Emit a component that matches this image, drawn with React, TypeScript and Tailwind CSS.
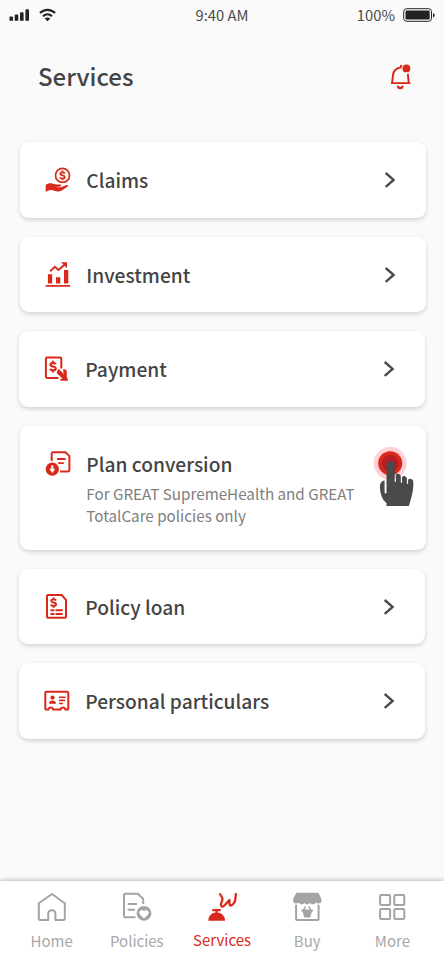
import React from 'react';

const RED = '#d9291c';

function Svg({ w, h, className = '', children }: { w: number; h: number; className?: string; children: React.ReactNode }) {
  return (
    <svg width={w} height={h} viewBox={`0 0 ${w} ${h}`} fill="none" className={`block shrink-0 ${className}`}>
      {children}
    </svg>
  );
}

/* Dollar sign drawn around the local origin */
function Dollar({ x, y, s }: { x: number; y: number; s: number }) {
  return (
    <g transform={`translate(${x} ${y}) scale(${s})`} stroke={RED} strokeWidth="2.1">
      <path d="M2.6-2.2C2-3.2 1-3.5 0-3.5c-1.5 0-2.4.7-2.4 1.7C-2.4.5 2.6-.6 2.6 1.8 2.6 2.9 1.5 3.6 0 3.6c-1.2 0-2.2-.4-2.9-1.4M0-5.5v2M0 3.5v2" />
    </g>
  );
}

function ClaimsIcon() {
  return (
    <Svg w={28} h={27}>
      <circle cx="18.5" cy="8.4" r="7" stroke={RED} strokeWidth="1.7" />
      <Dollar x={18.5} y={8.4} s={0.88} />
      <path d="M1.7 17.9c2-1.6 4.7-2 7.2-1.2l3.2.9h4c1.5 0 1.6 1.8.2 2l-4 .3v.4h4.7l5.5-2.3c1.4-.5 2.1.7 1.1 1.5l-5 3.6c-1.6 1.1-3.4 1.7-5.2 1.3l-5-1.2c-1.8-.4-3-.1-4.2.6l-2.5 1z" fill={RED} />
    </Svg>
  );
}

function InvestmentIcon() {
  return (
    <Svg w={28} h={27}>
      <path d="M1.7 23h24.4v1.8H1.7zM3.9 12.3h4.3v9.3H3.9zM12 15.3h4.3v6.3H12zM20 8h4.3v13.6H20z" fill={RED} />
      <path d="m6.2 9.2 4.6-4.4 3.6 3.1 7-5.9" stroke={RED} strokeWidth="2" />
      <path d="M17 .3h6v6z" fill={RED} />
    </Svg>
  );
}

function PaymentIcon() {
  return (
    <Svg w={28} h={27}>
      <path d="M18.3 12.6V2.9c0-.9-.6-1.3-1.4-1.3H4.3c-.9 0-1.4.5-1.4 1.3v17.8c0 .9.6 1.4 1.4 1.4h11.2" stroke={RED} strokeWidth="2" />
      <Dollar x={10} y={10.6} s={1.05} />
      <path d="m15.3 14.2 5.4 4.2-.6-5 1.1-.4 1 1.1.6-.6 1 1.6v6l1.4 3.6h-7.6l-.5-1.5 2.4-.7-4.7-4.2c-.9-.9-.9-2.1-1-2.9z" fill={RED} />
      <path d="m15 13.8 5 4.6" stroke={RED} strokeWidth="2" />
    </Svg>
  );
}

function PlanIcon() {
  return (
    <Svg w={28} h={27}>
      <path d="M7.7 9.9V2.6c0-.8.5-1.3 1.3-1.3h12.4l4 3.8v14c0 .8-.5 1.3-1.3 1.3h-8.2" stroke={RED} strokeWidth="2" />
      <path d="M13 8h8.6M14.2 12.2h5.6" stroke={RED} strokeWidth="1.8" />
      <circle cx="8.3" cy="18.2" r="6.6" fill={RED} />
      <path d="M8.3 14.3v4" stroke="white" strokeWidth="2" />
      <path d="M5.4 17.8h5.8l-2.9 4.4z" fill="white" />
    </Svg>
  );
}

function LoanIcon() {
  return (
    <Svg w={28} h={27}>
      <path d="M4 2v20.8c0 .6.4 1 1 1h17c.6 0 1-.4 1-1V5.8L18.7 1H5c-.6 0-1 .4-1 1z" stroke={RED} strokeWidth="2" />
      <Dollar x={10.6} y={8.6} s={0.95} />
      <path d="M7.5 16.3h4M12.5 16.3h7.2M7.5 20h4M12.5 20h7.2" stroke={RED} strokeWidth="2" />
    </Svg>
  );
}

function ParticularsIcon() {
  return (
    <Svg w={28} h={27}>
      <path d="M2.3 5v15.4c0 .8.4 1.2 1.1 1.2h2c.4-2.9 4.4-2.9 4.8 0h7.4c.4-2.9 4.4-2.9 4.8 0h1.8c.7 0 1.1-.4 1.1-1.2V5c0-.8-.4-1.2-1.1-1.2H3.4C2.7 3.8 2.3 4.2 2.3 5z" stroke={RED} strokeWidth="2" />
      <circle cx="9.5" cy="9.6" r="2.1" fill={RED} />
      <path d="M6 15.7c0-4.4 7-4.4 7 0zM16 8.5h6.6v1.6H16zM16 11.6h6v1.6h-6zM16 14.7h4v1.6h-4z" fill={RED} />
    </Svg>
  );
}

function Chevron() {
  return (
    <Svg w={12} h={18} className="mt-[29px]">
      <path d="m1.7 2 7.9 6.9-7.9 6.9" stroke="#4a4a4a" strokeWidth="2.4" />
    </Svg>
  );
}

function HomeIcon() {
  return (
    <Svg w={30} h={30}>
      <path d="M1.8 11.2v15.9c0 .5.3.8.8.8h8.6v-6.2c0-4.7 7.2-4.7 7.2 0v6.2h8.6c.5 0 .8-.3.8-.8V11.2L15 2z" stroke="#a3a5a4" strokeWidth="2" strokeLinejoin="round" />
    </Svg>
  );
}

function PoliciesIcon() {
  return (
    <Svg w={30} h={30}>
      <path d="M21.2 12V7L16 1.7H3.2c-.8 0-1.2.4-1.2 1.2v21.2c0 .8.4 1.2 1.2 1.2h10.3M5.7 12.1h9.3M5.7 17.7h7.3" stroke="#a3a5a4" strokeWidth="2" />
      <circle cx="22" cy="21.3" r="7.4" fill="#a3a5a4" />
      <path d="M22 26.4 18 22.4A2.55 2.55 0 0 1 22 19.2 2.55 2.55 0 0 1 26 22.4z" fill="white" />
    </Svg>
  );
}

function ServicesIcon() {
  return (
    <Svg w={32} h={30}>
      <path d="M2.3 28.7c.1-5 3.4-8.2 8.3-8.2s8.3 3.2 8.4 8.2z" fill={RED} />
      <path d="M6.3 18.2h8.4M10.5 18.2v4" stroke={RED} strokeWidth="2.2" />
      <path d="M14 1.2c0 3.6 3.4 3.5 2.4 6.8-.7 2-2 3.6-1.4 5.4.9 2.3 3 1.1 4.6-1.2l3.8-4.2c.4 2-.7 5.5 1.4 5.5 1.9 0 3.3-2.5 4.2-4.2L30 1.2" stroke={RED} strokeWidth="2.3" strokeLinejoin="round" />
    </Svg>
  );
}

function BuyIcon() {
  return (
    <Svg w={30} h={30}>
      <path d="M4.4.7h21.9c1.3 2.2 2.7 4.7 3.2 7.2.4 3.5-3.5 4.6-5.5 2.6-1.7 2.4-4.7 2.4-6 .3-1.5 2.1-4.1 2.1-5.6 0-1.5 2.1-4.3 2.1-5.9-.3C4.4 12.5.6 11.3 1.1 7.9c.4-2.5 2.1-4.9 3.3-7.2z" fill="#a3a5a4" />
      <path d="M4.1 12.7v14.5c0 .5.3.8.8.8h20.9c.5 0 .8-.3.8-.8V12.7" stroke="#a3a5a4" strokeWidth="2" />
      <path d="M9.4 17.4h1.7l1.9-3.3 1.2.7-1.5 2.6h5l-1.5-2.6 1.2-.7 1.9 3.3h1.7v2.2H20l-1.8 5.9h-5.8l-1.9-5.9H9.4z" fill="#a3a5a4" />
    </Svg>
  );
}

function MoreIcon() {
  return (
    <Svg w={30} h={30}>
      <g stroke="#a3a5a4" strokeWidth="2">
        <rect x="3.1" y="3" width="10" height="10" rx="1" />
        <rect x="17.3" y="3" width="10" height="10" rx="1" />
        <rect x="3.1" y="17.1" width="10" height="10" rx="1" />
        <rect x="17.3" y="17.1" width="10" height="10" rx="1" />
      </g>
    </Svg>
  );
}

function TapHand() {
  return (
    <Svg w={42} h={62} className="absolute right-[10.5px] top-[19px]">
      <circle cx="17.2" cy="18.3" r="16.5" fill="#ffd0d6" />
      <circle cx="17.2" cy="18.3" r="12" fill="#db261c" />
      <circle cx="17.2" cy="18.3" r="8.3" fill="#b51c26" />
      <path d="M13.5 20c0-5.4 8.2-5.4 8.2 0v16.5c0 .5 1.2.5 1.2 0v-6.2c0-2.3 4.7-1.8 4.9 1.2v6c0 .5 1.2.5 1.2 0v-5c0-2.4 4.7-2 4.9 1v5c0 .5 1.2.5 1.2 0v-3.3c.3-2.4 4.8-1.7 5.2 1.4.3 5.4-.4 10.4-1.9 15.7L35.9 61H13.5v-2.7l-3.3-3.5C8.2 50.5 7 46.8 6.9 42.5c0-4 1.1-6.6 4.7-7.1v12.3c.1 1 1.8 1 1.9 0z" fill="#4a4a4a" />
    </Svg>
  );
}

type Item = { label: string; icon: React.ReactNode; nudge?: boolean; note?: string };

const items: Item[] = [
  { label: 'Claims', icon: <ClaimsIcon /> },
  { label: 'Investment', icon: <InvestmentIcon /> },
  { label: 'Payment', icon: <PaymentIcon />, nudge: true },
  { label: 'Plan conversion', icon: <PlanIcon />, note: 'For GREAT SupremeHealth and GREAT TotalCare policies only' },
  { label: 'Policy loan', icon: <LoanIcon />, nudge: true },
  { label: 'Personal particulars', icon: <ParticularsIcon />, nudge: true },
];

function Card({ item }: { item: Item }) {
  return (
    <div
      className={`relative flex w-[405.5px] items-start rounded-[9px] bg-white pl-[24px] pr-[29.5px] shadow-[0_2px_4px_rgba(0,0,0,0.16)] ${
        item.nudge ? 'ml-[19px]' : 'ml-[20px]'
      } ${item.note ? 'h-[124px]' : 'h-[75.5px]'}`}
    >
      <div className="mt-[25px] w-[42.3px]">{item.icon}</div>
      <div className="flex-1 pt-[23px]">
        <div className="text-[19.2px] font-medium leading-[30px] text-[#444]">{item.label}</div>
        {item.note && <div className="mt-[3px] w-[280px] text-[15.2px] leading-[22px] text-[#808080]">{item.note}</div>}
      </div>
      {item.note ? <TapHand /> : <Chevron />}
    </div>
  );
}

const tabs = [
  { label: 'Home', icon: <HomeIcon /> },
  { label: 'Policies', icon: <PoliciesIcon /> },
  { label: 'Services', icon: <ServicesIcon />, active: true },
  { label: 'Buy', icon: <BuyIcon /> },
  { label: 'More', icon: <MoreIcon /> },
];

export default function App() {
  return (
    <div className="flex h-[960px] w-[444px] flex-col overflow-hidden bg-[#fafafa] font-['Noto_Sans_CJK_SC',sans-serif] text-[#4a4a4a]">
      <header className="grid h-[30px] grid-cols-3 items-center pl-[9px] pr-[9px] text-[14.75px] leading-[30px]">
        <div className="flex items-center gap-[10px]">
          <Svg w={20} h={14}>
            <path d="M.5 9.5q0-1 1-1h1.5q1 0 1 1v3.2H.5zM5.7 7.5q0-1 1-1h1.6q1 0 1 1v5.2H5.7zM11 5.3q0-1 1-1h1.6q1 0 1 1v7.4H11zM16.4 2.2q0-1 1-1H19q1 0 1 1v10.5h-3.6z" fill="#222" />
          </Svg>
          <Svg w={17} h={14}>
            <path d="M1 5.1c4.2-4.3 10.8-4.3 15 0M4 8.3c2.6-2.6 6.4-2.6 9 0" stroke="#222" strokeWidth="2.1" />
            <path d="m8.5 13.2-2.8-2.7c1.5-1.5 4.1-1.5 5.6 0z" fill="#222" />
          </Svg>
        </div>
        <div className="-mt-px text-center">9:40 AM</div>
        <div className="flex items-center justify-end gap-[8px]">
          <span className="-mt-px">100%</span>
          <Svg w={32} h={16}>
            <rect x=".7" y="1.7" width="27.8" height="12.6" rx="3" stroke="#222" strokeWidth="1" />
            <rect x="2.5" y="3.5" width="24.2" height="9" rx="1.2" fill="#222" />
            <path d="M30 6c2.2.8 2.2 3.6 0 4.4z" fill="#222" />
          </Svg>
        </div>
      </header>

      <div className="flex h-[112px] items-start justify-between pl-[38px] pr-[31px] pt-[28px]">
        <h1 className="-mt-px text-[24px] font-medium leading-[38px] text-[#444]">Services</h1>
        <Svg w={24} h={28} className="mt-[4px]">
          <path d="M12.3 2.9 11.6 5.4C7 6.2 4.4 8.9 4 13l-.9 8M18.8 11.8l1 9.2" stroke={RED} strokeWidth="2" />
          <path d="M2 20.2h19.3V22H2z" fill={RED} />
          <path d="M8.9 23.7c0 3.2 4.6 3.2 4.6 0" stroke={RED} strokeWidth="2.2" />
          <circle cx="17.4" cy="6.4" r="3.9" fill={RED} />
        </Svg>
      </div>

      <main className="flex flex-1 flex-col gap-[19px]">
        {items.map((item) => (
          <Card key={item.label} item={item} />
        ))}
      </main>

      <nav className="grid h-[79px] grid-cols-5 bg-white px-[9px] shadow-[0_-1px_4px_rgba(0,0,0,0.25)]">
        {tabs.map((t) => (
          <div key={t.label} className="flex flex-col items-center pt-[11px]">
            {t.icon}
            <span className={`text-[15px] leading-[24px] ${t.active ? 'mt-[6px] text-[#d9291c]' : 'mt-[7px] text-[#a8a8a8]'}`}>{t.label}</span>
          </div>
        ))}
      </nav>
    </div>
  );
}
